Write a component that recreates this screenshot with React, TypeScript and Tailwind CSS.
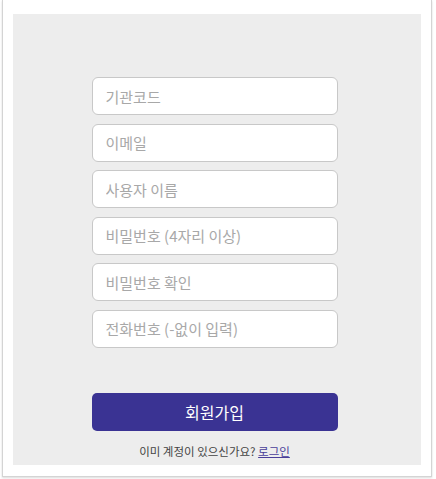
const fields = [
  "기관코드",
  "이메일",
  "사용자 이름",
  "비밀번호 (4자리 이상)",
  "비밀번호 확인",
  "전화번호 (-없이 입력)",
];

export default function App() {
  return (
    <div
      className="w-[436px] h-[479px] bg-white pl-[2px] pr-[4px] pt-0 pb-[2px]"
      style={{ fontFamily: '"Noto Sans CJK KR", "Noto Sans", sans-serif' }}
    >
      <div className="h-full border-l border-r border-b border-[#d4d4d4] px-[10px] pt-[14px] pb-[11px] shadow-[0_1px_2px_rgba(0,0,0,0.15)]">
        <div className="h-full bg-[#ededed] flex flex-col items-center pt-[63px] pr-[5px]">
          <div className="flex flex-col gap-[8.6px] w-[246px]">
            {fields.map((f) => (
              <input
                key={f}
                placeholder={f}
                className="h-[38px] w-full rounded-[6px] border border-[#c8c8c8] bg-white px-[13px] text-[15px] text-[#333] placeholder:text-[#a8a8a8] outline-none"
              />
            ))}
          </div>
          <button className="mt-[45px] h-[38px] w-[246px] rounded-[5px] bg-[#3a3393] text-white text-[16px]">
            회원가입
          </button>
          <div className="mt-[12px] text-[11.5px] text-[#444]">
            이미 계정이 있으신가요?{" "}
            <a href="#" className="text-[#4a3f9a] underline">
              로그인
            </a>
          </div>
        </div>
      </div>
    </div>
  );
}
